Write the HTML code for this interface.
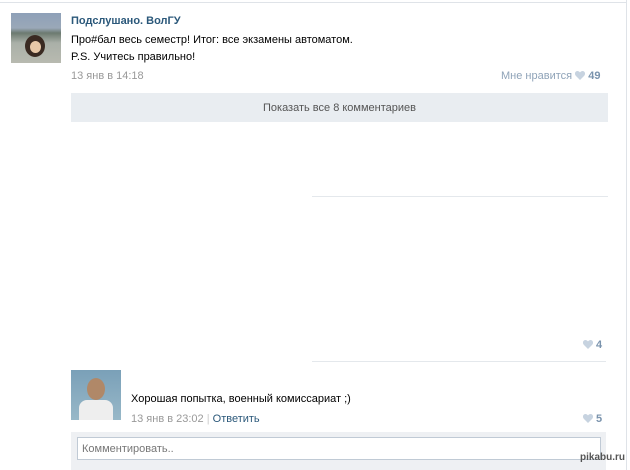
<html><head><style>
body{margin:0;width:630px;height:470px;background:#fff;font-family:"Liberation Sans",sans-serif;font-size:11px;color:#000;position:relative;overflow:hidden}
.a{position:absolute}
.g{color:#999}
.h{display:inline-block;width:10px;height:9px;vertical-align:-1px}
</style></head><body>
<div class="a" style="left:0;top:2px;width:626px;height:1px;background:#dfe3e8"></div>
<div class="a" style="left:626px;top:0;width:1px;height:470px;background:#dfe3e8"></div>
<div class="a" style="left:11px;top:13px;width:50px;height:50px;background:linear-gradient(#8ea0b8 0,#9aa8b8 30%,#6c7a70 40%,#aab0a8 60%,#b8bab0 100%)">
<div class="a" style="left:14px;top:22px;width:20px;height:22px;border-radius:50%;background:#3a2a22"></div>
<div class="a" style="left:19px;top:28px;width:11px;height:12px;border-radius:50%;background:#e8c8a8"></div></div>
<div class="a" style="left:71px;top:15px;font-weight:bold;color:#2b587a;font-size:11px">Подслушано. ВолГУ</div>
<div class="a" style="left:71px;top:34px">Про#бал весь семестр! Итог: все экзамены автоматом.</div>
<div class="a" style="left:71px;top:51px">P.S. Учитесь правильно!</div>
<div class="a g" style="left:71px;top:70px">13 янв в 14:18</div>
<div class="a" style="left:501px;top:70px;color:#8fa3b8">Мне нравится <svg class="h" viewBox="0 0 10 9"><path d="M5 9L1 5C-1 3 0 0 2.5 0 4 0 5 1.5 5 1.5S6 0 7.5 0C10 0 11 3 9 5Z" fill="#c7d3e0"/></svg> <b style="color:#7a93ad">49</b></div>
<div class="a" style="left:71px;top:93px;width:537px;height:29px;background:#e9edf1;color:#555;text-align:center;line-height:30px">Показать все 8 комментариев</div>
<div class="a" style="left:312px;top:196px;width:296px;height:1px;background:#e4e8ec"></div>
<div class="a" style="left:583px;top:339px;color:#7a93ad;font-weight:bold"><svg class="h" viewBox="0 0 10 9"><path d="M5 9L1 5C-1 3 0 0 2.5 0 4 0 5 1.5 5 1.5S6 0 7.5 0C10 0 11 3 9 5Z" fill="#c7d3e0"/></svg> 4</div>
<div class="a" style="left:312px;top:361px;width:294px;height:1px;background:#e4e8ec"></div>
<div class="a" style="left:71px;top:370px;width:50px;height:50px;background:linear-gradient(#7aa0b8,#98b8c8)">
<div class="a" style="left:16px;top:8px;width:18px;height:22px;border-radius:50%;background:#b08868"></div>
<div class="a" style="left:8px;top:30px;width:34px;height:20px;background:#eee;border-radius:8px 8px 0 0"></div></div>
<div class="a" style="left:131px;top:393px">Хорошая попытка, военный комиссариат ;)</div>
<div class="a g" style="left:131px;top:413px">13 янв в 23:02 <span style="color:#ccc">|</span> <span style="color:#2b587a">Ответить</span></div>
<div class="a" style="left:583px;top:413px;color:#7a93ad;font-weight:bold"><svg class="h" viewBox="0 0 10 9"><path d="M5 9L1 5C-1 3 0 0 2.5 0 4 0 5 1.5 5 1.5S6 0 7.5 0C10 0 11 3 9 5Z" fill="#c7d3e0"/></svg> 5</div>
<div class="a" style="left:71px;top:432px;width:535px;height:38px;background:#eef0f3"></div>
<div class="a" style="left:77px;top:437px;height:23px;background:#fff;border:1px solid #c0cad5;color:#777;line-height:23px;padding-left:4px;box-sizing:border-box;width:524px">Комментировать..</div>
<div class="a" style="left:580px;top:452px;color:#555;font-size:10px;font-weight:bold">pikabu.ru</div>
</body></html>
